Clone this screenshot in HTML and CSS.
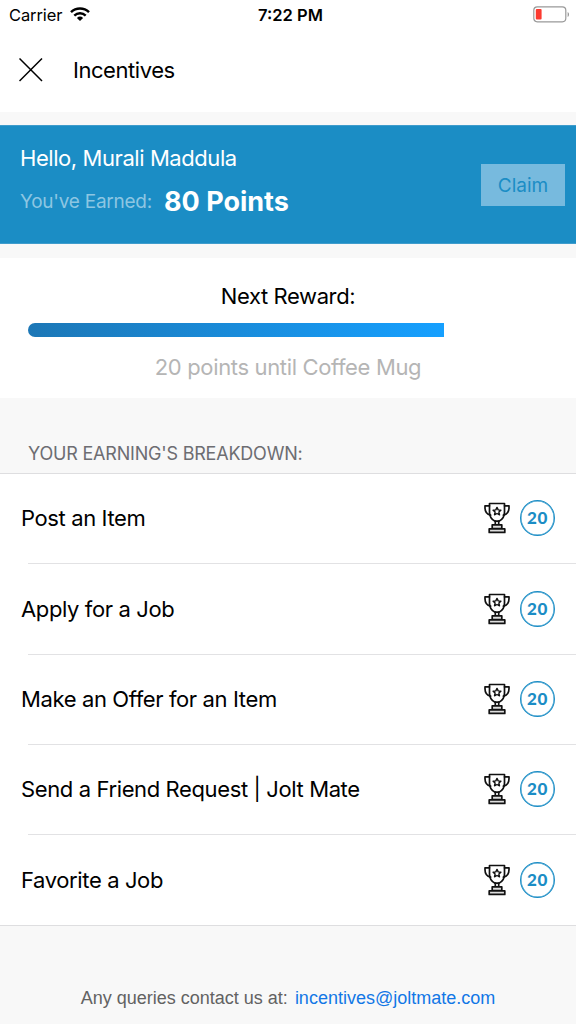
FILE: index.html
```html
<!DOCTYPE html>
<html lang="en">
<head>
    <meta charset="UTF-8">
    <meta name="viewport" content="width=device-width, initial-scale=1.0">
    <title>Incentives</title>
    <link rel="stylesheet" href="styles.css">
</head>
<body>
    <svg class="symbols" width="0" height="0">
        <symbol id="trophy" viewBox="0 0 26 32">
            <g fill="none" stroke="#111" stroke-width="1.7" stroke-linejoin="round" stroke-linecap="round">
                <path d="M5.500 1.500h15v8.500c0 4.500-2.300 7.700-5.500 9.200h-4c-3.200-1.500-5.500-4.700-5.500-9.200z"/>
                <path d="M5.500 3.800H1v2c0 4 2 6.600 5.600 7.400M20.500 3.800H25v2c0 4-2 6.600-5.600 7.400"/>
                <path d="M11.300 19.200v3.600M14.700 19.200v3.600"/>
                <path fill="#ddd" d="M8.200 22.800h9.600v3.900H8.200zM5.200 26.900h15.600v3.500H5.200z"/>
                <path stroke-width="1.400" d="M13 5.400l1.200 2.500 2.700.3-2 1.900.6 2.700-2.500-1.300-2.500 1.300.6-2.700-2-1.900 2.700-.3z"/>
            </g>
        </symbol>
    </svg>

    <div class="status-bar">
        <div class="carrier">
            <span>Carrier</span>
            <svg width="20" height="14" viewBox="0 0 20 14">
                <path d="M1 5.200a13 13 0 0 1 18 0" fill="none" stroke="#000" stroke-width="2.500"/>
                <path d="M4.300 8.600a8.200 8.200 0 0 1 11.400 0" fill="none" stroke="#000" stroke-width="2.400"/>
                <path d="M6.900 10.900a4.500 4.500 0 0 1 6.200 0L10 14z"/>
            </svg>
        </div>
        <span class="time">7:22 PM</span>
        <svg class="battery" width="37" height="17" viewBox="0 0 37 17">
            <rect x=".8" y=".8" width="32" height="15" rx="3.500" fill="#fff" stroke="#999" stroke-width="1.200"/>
            <rect x="2.800" y="3" width="5.800" height="10.600" rx="1" fill="#fc3a30"/>
            <path d="M34.700 6v5c1.600-.7 1.600-4.300 0-5z" fill="#888"/>
        </svg>
    </div>

    <div class="nav-bar">
        <svg class="close" width="24" height="24" viewBox="0 0 24 24">
            <path d="M.5.500l22.500 22.500M23 .5L.5 23" stroke="#000" stroke-width="1.500"/>
        </svg>
        <h1>Incentives</h1>
    </div>

    <div class="banner">
        <div class="banner-text">
            <p class="hello">Hello, Murali Maddula</p>
            <p class="earned">You've Earned: <strong>80 Points</strong></p>
        </div>
        <button class="claim">Claim</button>
    </div>

    <div class="reward">
        <h2>Next Reward:</h2>
        <div class="progress"><div class="progress-fill" style="width: 80%"></div></div>
        <p>20 points until Coffee Mug</p>
    </div>

    <h3 class="section-title">YOUR EARNING'S BREAKDOWN:</h3>
    <ul class="list">
        <li><span class="name">Post an Item</span><svg class="trophy"><use href="#trophy"/></svg><span class="points">20</span></li>
        <li><span class="name">Apply for a Job</span><svg class="trophy"><use href="#trophy"/></svg><span class="points">20</span></li>
        <li><span class="name">Make an Offer for an Item</span><svg class="trophy"><use href="#trophy"/></svg><span class="points">20</span></li>
        <li><span class="name">Send a Friend Request | Jolt Mate</span><svg class="trophy"><use href="#trophy"/></svg><span class="points">20</span></li>
        <li><span class="name">Favorite a Job</span><svg class="trophy"><use href="#trophy"/></svg><span class="points">20</span></li>
    </ul>

    <p class="footer">Any queries contact us at: <a href="mailto:incentives@joltmate.com">incentives@joltmate.com</a></p>
</body>
</html>
```
FILE: styles.css
```css
* {
    box-sizing: border-box;
    margin: 0;
    padding: 0;
}

body {
    height: 1024px;
    overflow: hidden;
    font-family: Inter, sans-serif;
    color: #000;
    background-color: #f8f8f8;
    white-space: nowrap;
}

.symbols {
    position: absolute;
}

.status-bar {
    display: grid;
    grid-template-columns: 1fr auto 1fr;
    align-items: center;
    height: 30px;
    padding: 0 6px 0 9px;
    background-color: #fff;
    font-size: 16.500px;
}

.carrier {
    display: flex;
    align-items: center;
    gap: 8px;
    letter-spacing: -0.1px;
}

.carrier svg {
    margin-top: -2px;
}

.time {
    padding-left: 2px;
    font-weight: 600;
}

.battery {
    justify-self: end;
    margin-top: -1px;
}

.nav-bar {
    display: flex;
    align-items: center;
    gap: 30px;
    height: 82px;
    padding: 0 0 3px 19px;
    background-color: #fff;
}

.nav-bar h1 {
    font-size: 22px;
    font-weight: 400;
    letter-spacing: -0.45px;
}

.banner {
    display: flex;
    align-items: center;
    justify-content: space-between;
    height: 119px;
    margin: 13px 0 14px;
    padding: 0 11px 0 20px;
    border-top: 1px solid #3f9ccc;
    border-bottom: 1px solid #3f9ccc;
    background-color: #1b8dc5;
    color: #fff;
}

.banner-text {
    padding-bottom: 6px;
}

.hello {
    font-size: 22px;
    line-height: 30px;
    letter-spacing: -0.43px;
}

.earned {
    display: flex;
    align-items: center;
    gap: 12px;
    margin-top: 11px;
    font-size: 19px;
    line-height: 36px;
    letter-spacing: -0.25px;
    color: #8dc6e2;
}

.earned strong {
    font-size: 27px;
    letter-spacing: 0;
    color: #fff;
}

.claim {
    width: 84px;
    height: 42px;
    padding-top: 1px;
    border: none;
    background-color: #77bade;
    color: #1b8dc5;
    font-family: inherit;
    font-size: 19px;
}

.reward {
    height: 140px;
    padding: 24px 28px 0;
    background-color: #fff;
    text-align: center;
}

.reward h2 {
    font-size: 22px;
    font-weight: 400;
    line-height: 28px;
    letter-spacing: -0.4px;
}

.progress {
    height: 14px;
    margin: 13px 0 15px;
    border-radius: 7px;
    overflow: hidden;
}

.progress-fill {
    height: 100%;
    background: linear-gradient(to right, #1c77b6, #16a0ff);
}

.reward p {
    color: #b5b5b5;
    font-size: 22px;
    line-height: 30px;
    letter-spacing: -0.35px;
}

.section-title {
    height: 75px;
    padding: 43px 28px 0;
    font-size: 18px;
    font-weight: 400;
    line-height: 26px;
    letter-spacing: -0.2px;
    color: #6d6d72;
}

.list {
    list-style: none;
    border-top: 1px solid #dedee0;
    border-bottom: 1px solid #dedee0;
    background-color: #fff;
}

.list li {
    display: flex;
    align-items: center;
    height: 90.300px;
    padding: 0 21px 1.500px;
    background: linear-gradient(#e2e2e4, #e2e2e4) 28px 100% / 100% 1px no-repeat;
}

.list li:last-child {
    background: none;
}

.name {
    flex: 1;
    font-size: 22px;
    letter-spacing: -0.38px;
}

.trophy {
    width: 26px;
    height: 32px;
    margin-right: 10.500px;
}

.points {
    width: 35px;
    height: 36px;
    border: 1px solid #1b8dc5;
    border-radius: 50%;
    box-shadow: inset 0 0 0 0.500px #1b8dc5;
    font-family: Lato, sans-serif;
    font-size: 17px;
    font-weight: 900;
    line-height: 34px;
    letter-spacing: 0.6px;
    text-align: center;
    color: #1b8dc5;
}

.footer {
    display: flex;
    justify-content: center;
    gap: 7px;
    padding-top: 60px;
    font-family: "Liberation Sans", Arial, sans-serif;
    font-size: 18px;
    line-height: 24px;
    color: #626262;
}

.footer a {
    color: #1277e6;
    text-decoration: none;
}
```
